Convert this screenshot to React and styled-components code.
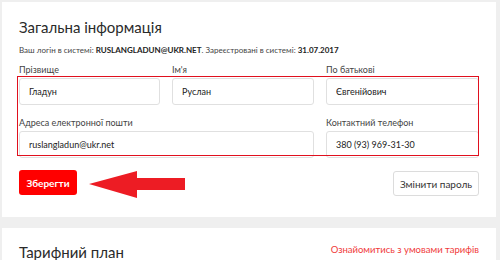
import React from "react";
import styled, { createGlobalStyle } from "styled-components";

const GlobalStyle = createGlobalStyle`
  html, body {
    margin: 0;
    padding: 0;
    background: #efefef;
    font-family: Lato, "Open Sans", sans-serif;
    color: #222;
  }
`;

export default function App() {
  return (
    <>
      <GlobalStyle />
      <Page>
        <Card>
          <Title>Загальна інформація</Title>
          <LoginLine>
            Ваш логін в системі: <b>RUSLANGLADUN@UKR.NET</b>. Зареєстровані в
            системі: <b>31.07.2017</b>
          </LoginLine>
          <Fields>
            <Field>
              <Label>Прізвище</Label>
              <Input defaultValue="Гладун" />
            </Field>
            <Field>
              <Label>Ім'я</Label>
              <Input defaultValue="Руслан" />
            </Field>
            <Field>
              <Label>По батькові</Label>
              <Input defaultValue="Євгенійович" />
            </Field>
            <Field $span={2}>
              <Label>Адреса електронної пошти</Label>
              <Input defaultValue="ruslangladun@ukr.net" />
            </Field>
            <Field>
              <Label>Контактний телефон</Label>
              <Input defaultValue="380 (93) 969-31-30" />
            </Field>
            <Highlight />
          </Fields>
          <Actions>
            <SaveWrap>
              <SaveButton>Зберегти</SaveButton>
              <Arrow width="97" height="28" viewBox="0 0 97 28">
                <polygon points="0,13 48,0 48,7 96,7 96,19 48,19 48,27" fill="#ed1c24" />
              </Arrow>
            </SaveWrap>
            <GhostButton>Змінити пароль</GhostButton>
          </Actions>
        </Card>
        <Card>
          <CardHead>
            <Title>Тарифний план</Title>
            <Link>Ознайомитись з умовами тарифів</Link>
          </CardHead>
        </Card>
      </Page>
    </>
  );
}

//STYLED COMPONENTS
const Page = styled.div`
  display: flex;
  flex-direction: column;
  gap: 11px;
  padding: 2px 4px 0 2px;
  height: 258px;
  overflow: hidden;
`;

const Card = styled.div`
  background: #fff;
  padding: 15px 16px 18px 17px;
  flex-shrink: 0;
`;

const Title = styled.h2`
  margin: 0;
  font-size: 15px;
  font-weight: 400;
  line-height: 20px;
  color: #2a2a2a;
`;

const LoginLine = styled.div`
  margin-top: 7px;
  font-size: 8px;
  line-height: 12px;
  color: #444;
  b {
    font-weight: 700;
    color: #222;
  }
`;

const Fields = styled.div`
  position: relative;
  display: grid;
  grid-template-columns: 141px 142px 153px;
  column-gap: 12px;
  row-gap: 12px;
  margin-top: 8px;
`;

const Field = styled.div`
  display: flex;
  flex-direction: column;
  gap: 2px;
  grid-column: span ${(p) => p.$span || 1};
`;

const Label = styled.div`
  font-size: 9px;
  line-height: 12px;
  color: #444;
`;

const Input = styled.input`
  box-sizing: border-box;
  height: 27px;
  width: 100%;
  border: 1px solid #e0e0e0;
  border-radius: 3px;
  padding: 0 9px;
  font-family: inherit;
  font-size: 9px;
  color: #222;
  background: #fff;
  outline: none;
`;

const Highlight = styled.div`
  position: absolute;
  left: -2px;
  top: 12px;
  width: 462px;
  height: 80px;
  border: 1px solid #e0101e;
  box-sizing: border-box;
  pointer-events: none;
`;

const Actions = styled.div`
  display: flex;
  justify-content: space-between;
  align-items: flex-start;
  margin-top: 12px;
  width: 460px;
`;

const SaveWrap = styled.div`
  display: flex;
  align-items: flex-start;
  gap: 12px;
`;

const SaveButton = styled.button`
  height: 25px;
  width: 58px;
  border: none;
  border-radius: 3px;
  background: #ff0000;
  color: #fff;
  font-family: inherit;
  font-size: 10px;
  font-weight: 700;
  padding: 0;
`;

const Arrow = styled.svg`
  display: block;
  margin-top: 1px;
`;

const GhostButton = styled.button`
  height: 25px;
  width: 86px;
  margin-top: 1px;
  border: 1px solid #dcdcdc;
  border-radius: 3px;
  background: #fff;
  color: #333;
  font-family: inherit;
  font-size: 10px;
  padding: 0;
`;

const CardHead = styled.div`
  display: flex;
  justify-content: space-between;
  align-items: center;
  width: 460px;
  margin-top: -1px;
`;

const Link = styled.span`
  color: #f03a3a;
  font-size: 9.5px;
  margin-top: -6px;
`;
